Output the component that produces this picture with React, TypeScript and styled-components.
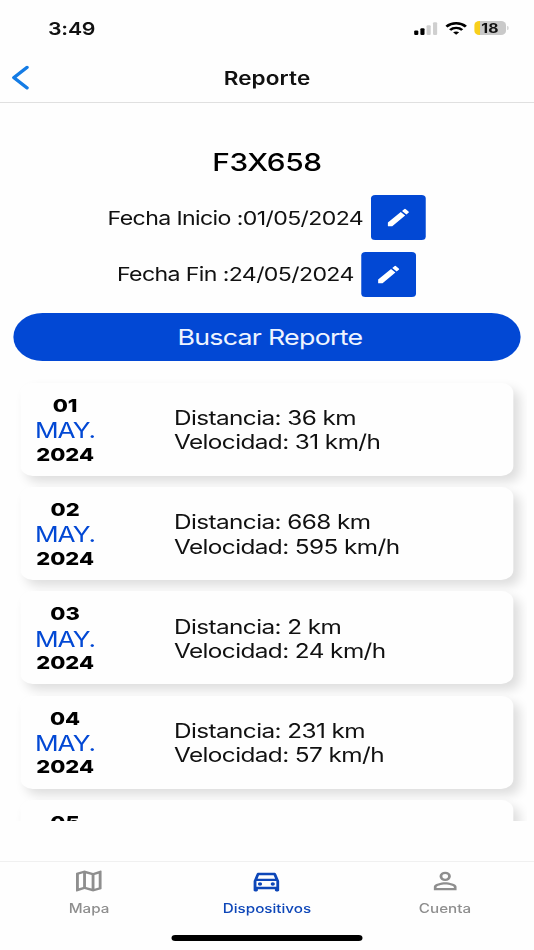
import React from "react";
import styled, { createGlobalStyle } from "styled-components";
import { MdEdit } from "react-icons/md";

const BLUE = "#0248d4";

const GlobalStyle = createGlobalStyle`
  * { box-sizing: border-box; }
  html, body { margin: 0; padding: 0; background: #fefefe; overflow: hidden; }
`;

const Viewport = styled.div`
  width: 534px;
  height: 950px;
  overflow: hidden;
  background: #fefefe;
`;

/* The interface is laid out 439px wide and widened to fill the viewport. */
const Screen = styled.div`
  width: 439px;
  height: 950px;
  display: flex;
  flex-direction: column;
  transform: scaleX(1.2164);
  transform-origin: 0 0;
  font-family: Inter, "Liberation Sans", sans-serif;
  color: #111;
`;

const StatusBar = styled.div`
  height: 52px;
  padding: 4px 21px 0 39.5px;
  display: flex;
  align-items: center;
  justify-content: space-between;
`;

const Clock = styled.span`
  font-size: 17.5px;
  font-weight: 600;
  letter-spacing: -0.2px;
`;

const StatusIcons = styled.div`
  display: flex;
  align-items: center;
`;

const Signal = styled.svg`
  width: 20px;
  height: 13px;
  margin-right: 6px;
`;

const Wifi = styled.svg`
  width: 18px;
  height: 13px;
  margin-right: 6px;
`;

const Battery = styled.div`
  width: 25.5px;
  height: 14px;
  border-radius: 4px;
  background: linear-gradient(90deg, #f8cf1c 0 5px, #c9c9c9 5px);
  font-size: 13px;
  font-weight: 700;
  line-height: 15px;
  text-align: center;
  padding-right: 1px;
  padding-left: 1px;
`;

const BatteryTip = styled.span`
  width: 1.5px;
  height: 4px;
  margin-left: 1px;
  border-radius: 0 2px 2px 0;
  background: #c9c9c9;
`;

const Header = styled.header`
  height: 51px;
  display: grid;
  grid-template-columns: 60px 1fr 60px;
  align-items: center;
  border-bottom: 1.5px solid #e0e0e0;
`;

const BackButton = styled.button`
  border: 0;
  background: none;
  padding: 0 0 0 9px;
  display: flex;
  svg { width: 16px; height: 26px; }
`;

const HeaderTitle = styled.h1`
  margin: 0;
  font-size: 18.5px;
  font-weight: 600;
  text-align: center;
  letter-spacing: 0.1px;
  line-height: 50px;
  padding-top: 1px;
`;

const Content = styled.main`
  flex: 1;
  display: flex;
  flex-direction: column;
`;

const Plate = styled.h2`
  margin: 43px 0 17px;
  font-size: 24.5px;
  line-height: 32px;
  font-weight: 500;
  text-align: center;
  letter-spacing: -0.25px;
  color: #000;
`;

const DateRow = styled.div`
  height: 45px;
  margin-bottom: 11.6px;
  padding-right: 1px;
  display: flex;
  align-items: center;
  justify-content: center;
  gap: 6px;
  font-size: 19px;
  letter-spacing: -0.51px;
`;

const DateText = styled.span`
  padding-top: 1px;
`;

const EditButton = styled.button`
  width: 45px;
  height: 45px;
  border: 0;
  border-radius: 3.5px;
  padding: 0;
  background: ${BLUE};
  color: #fff;
  display: flex;
  align-items: center;
  justify-content: center;
  svg { width: 23px; height: 23px; }
`;

const SearchButton = styled.button`
  flex: none;
  height: 47.5px;
  margin: 5px 11.5px 0 11.3px;
  padding: 0 0 0 5px;
  border: 0;
  border-radius: 24px;
  background: ${BLUE};
  color: #eef4ff;
  font: 400 22px Inter, "Liberation Sans", sans-serif;
  letter-spacing: -0.6px;
`;

const List = styled.div`
  height: 443px;
  margin: 17.2px 6px 0 11px;
  padding: 5px 11.5px 0 6px;
  overflow: hidden;
  display: flex;
  flex-direction: column;
  gap: 11.3px;
`;

const Card = styled.article`
  flex: none;
  height: 93px;
  border-radius: 10px;
  background: #fefefe;
  box-shadow: 5px 6px 10px rgba(0, 0, 0, 0.13);
  padding-top: 10.9px;
  display: flex;
  align-items: flex-start;
`;

const DateColumn = styled.div`
  width: 73px;
  margin-right: 53px;
  display: flex;
  flex-direction: column;
  align-items: center;
  line-height: 24.4px;
`;

const DateStrong = styled.span`
  font-size: 18px;
  font-weight: 800;
  color: #000;
`;

const Month = styled.span`
  font-size: 21.5px;
  letter-spacing: -0.8px;
  color: ${BLUE};
`;

const Stats = styled.div`
  padding-top: 12.2px;
  font-size: 20px;
  line-height: 24.4px;
  letter-spacing: -0.48px;
`;

const TabBar = styled.nav`
  height: 89.5px;
  border-top: 1.5px solid #f0f0f0;
  display: grid;
  grid-template-columns: repeat(3, 1fr);
  grid-template-rows: 73px auto;
  justify-items: center;
`;

const Tab = styled.div<{ $active?: boolean }>`
  padding-top: 5.5px;
  display: flex;
  flex-direction: column;
  align-items: center;
  color: ${(p) => (p.$active ? "#0d46b8" : "#8e8e8e")};
  font-size: 12.5px;
  line-height: 16px;
  font-weight: 500;
  letter-spacing: 0;
  svg { width: 28px; height: 28px; fill: currentColor; margin-bottom: 6px; }
`;

const HomeIndicator = styled.div`
  grid-column: 1 / -1;
  width: 157px;
  height: 6px;
  border-radius: 3px;
  background: #000;
`;

const records = [
  { day: "01", distance: 36, speed: 31 },
  { day: "02", distance: 668, speed: 595 },
  { day: "03", distance: 2, speed: 24 },
  { day: "04", distance: 231, speed: 57 },
  { day: "05" },
];

const tabs = [
  {
    label: "Mapa",
    path: "M20.5,3L20.34,3.03L15,5.1L9,3L3.36,4.9C3.15,4.97 3,5.15 3,5.38V20.5A0.5,0.5 0 0,0 3.5,21L3.66,20.97L9,18.9L15,21L20.64,19.1C20.85,19.03 21,18.85 21,18.62V3.5A0.5,0.5 0 0,0 20.5,3M10,5.47L14,6.87V18.53L10,17.13V5.47M5,6.46L8,5.45V17.15L5,18.31V6.46M19,17.54L16,18.55V6.86L19,5.7V17.54Z",
  },
  {
    label: "Dispositivos",
    active: true,
    path: "M18.9,6C18.7,5.4 18.1,5 17.5,5H6.5C5.8,5 5.3,5.4 5.1,6L3,12V20C3,20.5 3.5,21 4,21H5C5.6,21 6,20.5 6,20V19H18V20C18,20.5 18.5,21 19,21H20C20.5,21 21,20.5 21,20V12L18.9,6M6.8,7H17.1L18.2,10H5.8L6.8,7M19,17H5V12H19V17M7.5,13A1.5,1.5 0 1,1 7.5,16A1.5,1.5 0 1,1 7.5,13M16.5,13A1.5,1.5 0 1,1 16.5,16A1.5,1.5 0 1,1 16.5,13Z",
  },
  {
    label: "Cuenta",
    path: "M12,4A4,4 0 0,1 16,8A4,4 0 0,1 12,12A4,4 0 0,1 8,8A4,4 0 0,1 12,4M12,6A2,2 0 0,0 10,8A2,2 0 0,0 12,10A2,2 0 0,0 14,8A2,2 0 0,0 12,6M12,13C14.67,13 20,14.33 20,17V20H4V17C4,14.33 9.33,13 12,13M12,14.9C9.03,14.9 5.9,16.36 5.9,17V18.1H18.1V17C18.1,16.36 14.97,14.9 12,14.9Z",
  },
];

export default function App() {
  return (
    <Viewport>
      <GlobalStyle />
      <Screen>
        <StatusBar>
          <Clock>3:49</Clock>
          <StatusIcons>
            <Signal viewBox="0 0 20 13">
              <rect x="0.5" y="8.5" width="3.4" height="4.5" rx="1" fill="#000" />
              <rect x="5.6" y="6.3" width="3.4" height="6.7" rx="1" fill="#000" />
              <rect x="10.7" y="3.2" width="3.4" height="9.8" rx="1" fill="#cfcfcf" />
              <rect x="16" y="0.2" width="3.4" height="12.8" rx="1" fill="#cfcfcf" />
            </Signal>
            <Wifi viewBox="0 0 18 13" fill="none" stroke="#000" strokeWidth="2.4">
              <path d="M1 4.6C5.4 0.2 12.6 0.2 17 4.6" />
              <path d="M4 8C6.8 5.2 11.2 5.2 14 8" />
              <path d="M6.5 10.3C8 9.1 10 9.1 11.5 10.3L9 12.8Z" fill="#000" stroke="none" />
            </Wifi>
            <Battery>18</Battery>
            <BatteryTip />
          </StatusIcons>
        </StatusBar>
        <Header>
          <BackButton aria-label="Volver">
            <svg viewBox="0 0 16 26" fill="none" stroke="#147ce5" strokeWidth="3" strokeLinecap="round" strokeLinejoin="round">
              <path d="M13.2 2.3L2.4 12.6L13.2 22.9" />
            </svg>
          </BackButton>
          <HeaderTitle>Reporte</HeaderTitle>
        </Header>
        <Content>
          <Plate>F3X658</Plate>
          <DateRow>
            <DateText>Fecha Inicio :01/05/2024</DateText>
            <EditButton aria-label="Editar inicio"><MdEdit /></EditButton>
          </DateRow>
          <DateRow>
            <DateText>Fecha Fin :24/05/2024</DateText>
            <EditButton aria-label="Editar fin"><MdEdit /></EditButton>
          </DateRow>
          <SearchButton>Buscar Reporte</SearchButton>
          <List>
            {records.map((r) => (
              <Card key={r.day}>
                <DateColumn>
                  <DateStrong>{r.day}</DateStrong>
                  {r.distance && <Month>MAY.</Month>}
                  {r.distance && <DateStrong>2024</DateStrong>}
                </DateColumn>
                {r.distance && (
                  <Stats>
                    <div>Distancia: {r.distance} km</div>
                    <div>Velocidad: {r.speed} km/h</div>
                  </Stats>
                )}
              </Card>
            ))}
          </List>
        </Content>
        <TabBar>
          {tabs.map((t) => (
            <Tab key={t.label} $active={t.active}>
              <svg viewBox="0 0 24 24"><path d={t.path} /></svg>
              {t.label}
            </Tab>
          ))}
          <HomeIndicator />
        </TabBar>
      </Screen>
    </Viewport>
  );
}
